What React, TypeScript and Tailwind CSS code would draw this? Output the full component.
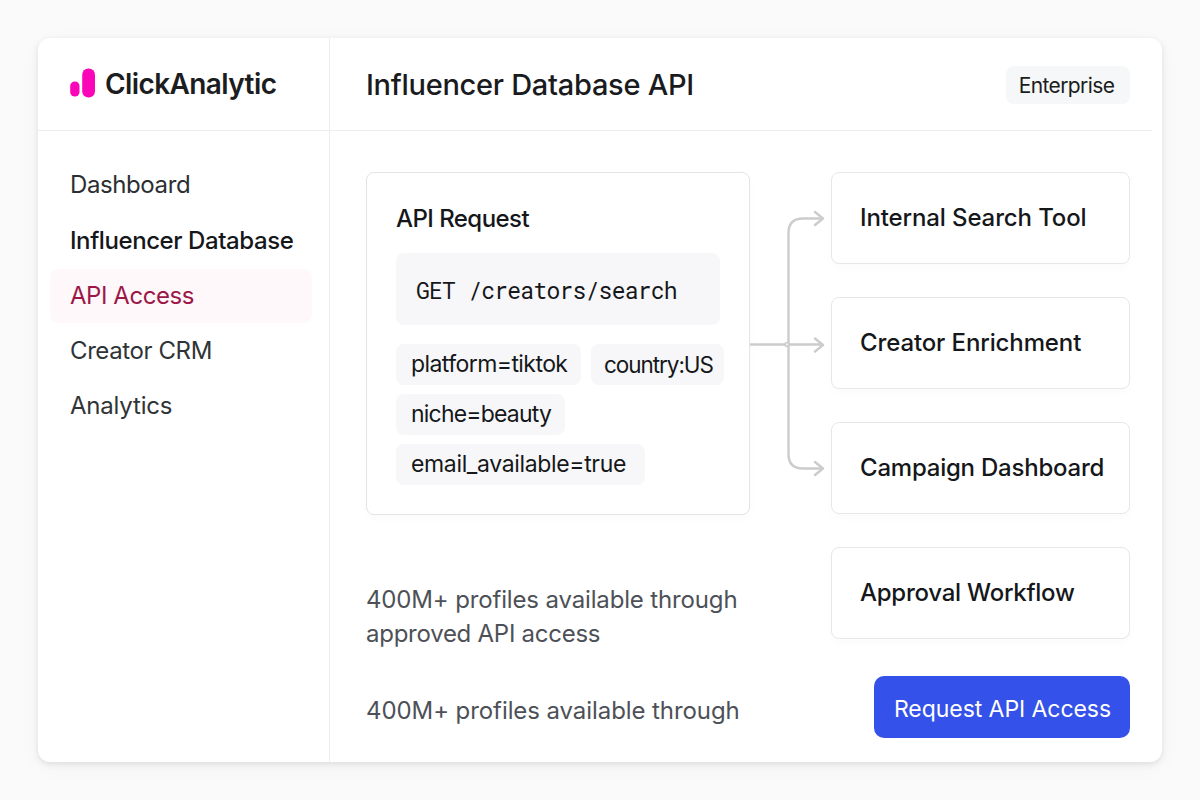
import clsx from 'clsx';

const navItems = [
  { label: 'Dashboard', className: 'h-[56px] tracking-[-0.4px] text-[#2b2f33]' },
  { label: 'Influencer Database', className: 'h-[56px] tracking-[-0.42px] font-medium text-[#15171a]' },
  { label: 'API Access', className: 'h-[55px] tracking-[-0.45px] text-[#9c1748]' },
  { label: 'Creator CRM', className: 'h-[55px] tracking-[-0.4px] text-[#2f3437]' },
  { label: 'Analytics', className: 'h-[55px] tracking-[-0.2px] text-[#2f3437]' },
];

const targets = [
  { label: 'Internal Search Tool', className: 'tracking-[-0.12px]' },
  { label: 'Creator Enrichment', className: 'tracking-[-0.12px]' },
  { label: 'Campaign Dashboard', className: 'tracking-[-0.22px]' },
  { label: 'Approval Workflow', className: 'tracking-[-0.25px]' },
];

function Logo() {
  return (
    <div className="flex items-center">
      <svg width="26" height="32" viewBox="0 0 26 32" fill="#fb05b8">
        <rect x="0.2" y="13.500" width="9.3" height="15" rx="4.6" />
        <rect x="12.200" y="0.500" width="12.800" height="29" rx="6.2" />
      </svg>
      <span className="ml-[9px] text-[28px] font-semibold tracking-[-0.6px] text-[#1c1d20]">ClickAnalytic</span>
    </div>
  );
}

function Sidebar() {
  return (
    <aside className="flex w-[292px] shrink-0 flex-col border-r border-[#ededee]">
      <div className="flex h-[93px] items-center border-b border-[#ededee] pl-8">
        <Logo />
      </div>
      <nav className="flex flex-col pt-[25px]">
        {navItems.map((item) => (
          <div key={item.label} className={clsx('flex items-center px-3 text-[24px] whitespace-nowrap', item.className)}>
            <div
              className={clsx(
                'flex h-[54px] w-[262px] items-center rounded-lg pt-px pl-5',
                item.label === 'API Access' && 'bg-[#fef8fa]'
              )}
            >
              {item.label}
            </div>
          </div>
        ))}
      </nav>
    </aside>
  );
}

function RequestCard() {
  return (
    <div className="h-[343px] w-[384px] rounded-lg border border-[#e3e4e6] bg-white px-[29px] pt-[30px] text-[#15171a] shadow-[0_4px_10px_rgba(0,0,0,0.02)]">
      <h2 className="text-[24px] leading-8 font-medium tracking-[-0.55px]">API Request</h2>
      <div className="mt-[18px] flex h-[72px] items-center rounded-lg bg-[#f7f7f9] pt-[3px] pl-5 font-['Roboto_Mono','DejaVu_Sans_Mono',monospace] text-[23px] tracking-[-0.76px]">
        GET /creators/search
      </div>
      <div className="mt-[19px] flex w-[328px] flex-col gap-[9px] text-[23px] whitespace-nowrap">
        <div className="flex gap-[10px]">
          <span className="flex h-[41px] w-[185px] items-center rounded-lg bg-[#f7f7f9] pl-[15px] tracking-[-0.57px]">platform=tiktok</span>
          <span className="flex h-[41px] w-[133px] items-center rounded-lg bg-[#f7f7f9] pl-[13px] text-[22.5px] tracking-[-1.05px]">country:US</span>
        </div>
        <span className="flex h-[41px] w-[169px] items-center rounded-lg bg-[#f7f7f9] pl-[15px] tracking-[-0.8px]">niche=beauty</span>
        <span className="flex h-[41px] w-[249px] items-center rounded-lg bg-[#f7f7f9] pl-[15px] tracking-[-0.35px]">email_available=true</span>
      </div>
    </div>
  );
}

function Connector() {
  return (
    <svg className="shrink-0" width="81" height="343" viewBox="0 0 81 343" fill="none" stroke="#cbcccd" strokeWidth="2.4" strokeLinecap="round" strokeLinejoin="round">
      <path d="M0 172.500H72" />
      <path d="M72 46.500H53Q38.500 46.500 38.500 61V282Q38.500 296.500 53 296.500H72" />
      <path d="M65 40L73 46.500L65 53M65 166.500L73 173L65 179.500M65 290L73 296.500L65 303" />
      <circle cx="37" cy="172.500" r="2" fill="#ededed" strokeWidth="1.500" />
    </svg>
  );
}

export default function App() {
  return (
    <div className="h-[800px] w-[1200px] bg-[#fafafa] p-[38px] font-['Inter',sans-serif]">
      <div className="flex h-[724px] w-[1124px] rounded-xl bg-white shadow-[0_2px_6px_rgba(0,0,0,0.1),0_6px_24px_rgba(0,0,0,0.03)]">
        <Sidebar />
        <main className="flex flex-1 flex-col">
          <header className="mr-[10px] flex h-[93px] items-center justify-between border-b border-[#ededee] pt-0.5 pr-[22px] pl-9">
            <h1 className="text-[29px] font-medium tracking-[-0.28px] text-[#1a1b1e]">Influencer Database API</h1>
            <span className="flex h-[38px] w-[124px] items-center justify-center rounded-lg bg-[#f6f7f8] pt-px pr-[3px] text-[21px] tracking-[-0.6px] text-[#1b1d20]">
              Enterprise
            </span>
          </header>
          <div className="flex pt-[41px] pl-9">
            <div className="flex w-[384px] flex-col">
              <RequestCard />
              <p className="mt-[68px] text-[24px] leading-[34px] tracking-[-0.15px] whitespace-nowrap text-[#4d5157]">
                400M+ profiles available through
                <br />
                <span className="tracking-[-0.26px]">approved API access</span>
              </p>
              <p className="mt-[43px] text-[24px] leading-[34px] tracking-[-0.08px] whitespace-nowrap text-[#4d5157]">
                400M+ profiles available through
              </p>
            </div>
            <Connector />
            <div className="flex w-[299px] flex-col gap-[33px]">
              {targets.map((target) => (
                <div
                  key={target.label}
                  className={clsx(
                    'flex h-[92px] items-center rounded-lg border border-[#e6e7e8] bg-white pl-7 text-[24px] font-medium whitespace-nowrap text-[#15171a] shadow-[0_4px_8px_rgba(0,0,0,0.02)]',
                    target.className
                  )}
                >
                  {target.label}
                </div>
              ))}
              <button className="mt-[4px] flex h-[62px] w-[256px] items-center justify-center self-end rounded-[10px] bg-[#3451e9] pt-[5px] pl-px text-[23px] tracking-[-0.06px] text-white">
                Request API Access
              </button>
            </div>
          </div>
        </main>
      </div>
    </div>
  );
}
